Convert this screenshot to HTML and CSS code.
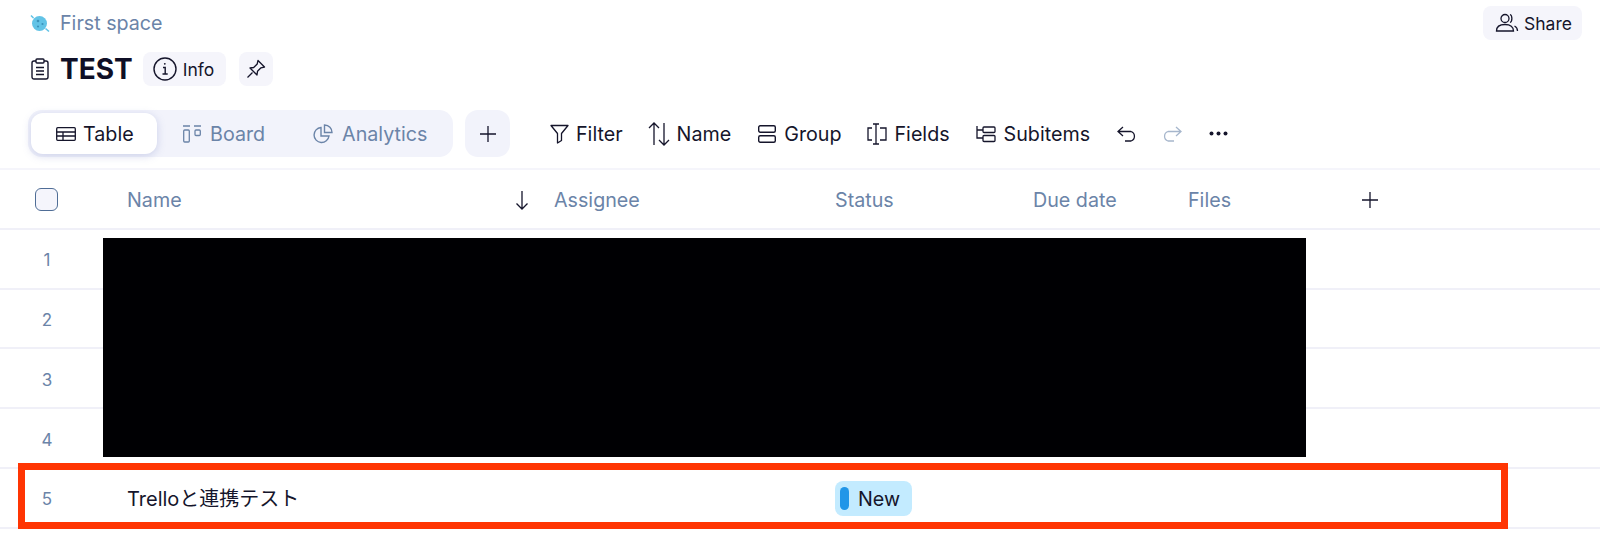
FILE: index.html
```html
<!DOCTYPE html>
<html lang="en">
<head>
<meta charset="utf-8">
<title>TEST</title>
<link rel="stylesheet" href="styles.css">
</head>
<body>
<div class="page">
  <header class="top">
    <div class="crumb">
      <svg class="planet" width="20" height="20" viewBox="0 0 20 20"><circle cx="9.500" cy="10.500" r="7.500" fill="#62c3e6"/><path d="M1 2.500 3.500 5M15.500 15.500l3.500 3" stroke="#62c3e6" stroke-width="1.600" fill="none"/><circle cx="8" cy="8" r="1.300" fill="#3b93ba"/><circle cx="12.500" cy="11" r="1.100" fill="#3b93ba"/><circle cx="8" cy="13.500" r="1.100" fill="#3b93ba"/></svg>
      <span>First space</span>
    </div>
    <button class="soft share">
      <svg width="24" height="20" viewBox="0 0 24 20" fill="none" stroke="#15152b" stroke-width="1.300"><circle cx="10" cy="5.500" r="4"/><path d="M1.500 18c0-4 3-6.500 8.500-6.500s8.500 2.500 8.500 6.500zM15 1.500c2.500.8 2.500 7.200 0 8M19.500 13c2 1 3 2.500 3 5"/></svg>
      <span>Share</span>
    </button>
  </header>

  <div class="title-row">
    <svg width="18" height="22" viewBox="0 0 18 22" fill="none" stroke="#15152b" stroke-width="1.400"><rect x="1" y="3" width="16" height="18" rx="2"/><rect x="5" y="1" width="8" height="4" rx="1" fill="#fff"/><path d="M5 9.500h8M5 13h8M5 16.500h8"/></svg>
    <h1>TEST</h1>
    <button class="soft info">
      <svg width="26" height="26" viewBox="0 0 26 26" fill="none" stroke="#15152b" stroke-width="1.400"><circle cx="13" cy="13" r="11"/><path d="M11 11.500h2.200V18M10.500 18h5.200"/><circle cx="12.800" cy="7.800" r=".9" fill="#15152b" stroke="none"/></svg>
      <span>Info</span>
    </button>
    <button class="soft pin">
      <svg width="20" height="20" viewBox="0 0 20 20" fill="none" stroke="#15152b" stroke-width="1.300" stroke-linejoin="round"><path d="M12 1.500 18.500 8l-3.500.8-3.500 3.500-.5 3.700L4 9l3.700-.5 3.500-3.500zM6.500 13.500 1.500 18.500"/></svg>
    </button>
  </div>

  <div class="toolbar">
    <nav class="tabs">
      <a class="tab active">
        <svg width="20" height="14" viewBox="0 0 20 14" fill="none" stroke="#15152b" stroke-width="1.300"><rect x=".7" y=".7" width="18.600" height="12.600" rx="1"/><path d="M.7 5h18.600M.7 9h18.600M7 5v8.300" /></svg>
        <span>Table</span>
      </a>
      <a class="tab board">
        <svg width="18" height="18" viewBox="0 0 18 18" fill="none" stroke="#6b84a8" stroke-width="1.300"><path d="M0 1h7M11 1h7"/><rect x=".7" y="5" width="5.600" height="12" rx="1"/><rect x="12" y="5" width="5.300" height="5.500" rx="1"/></svg>
        <span>Board</span>
      </a>
      <a class="tab analytics">
        <svg width="20" height="20" viewBox="0 0 20 20" fill="none" stroke="#6b84a8" stroke-width="1.400"><path d="M8 3.500a7.500 7.500 0 1 0 8 8.500H8z"/><path d="M11.500 1v7.500H19C19 4.500 16 1.200 11.500 1z"/></svg>
        <span>Analytics</span>
      </a>
    </nav>
    <button class="add-view">
      <svg width="18" height="18" viewBox="0 0 18 18" stroke="#15152b" stroke-width="1.300"><path d="M9 1v16M1 9h16"/></svg>
    </button>

    <div class="actions">
      <a class="act filter">
        <svg width="19" height="20" viewBox="0 0 19 20" fill="none" stroke="#15152b" stroke-width="1.300" stroke-linejoin="round"><path d="M1 1.500h17l-6.500 8v7l-4 2.500v-9.500z"/></svg>
        <span>Filter</span>
      </a>
      <a class="act sort">
        <svg width="22" height="24" viewBox="0 0 22 24" fill="none" stroke="#15152b" stroke-width="1.300"><path d="M6 23V1M1 6l5-5 5 5M16 1v22M11 18l5 5 5-5"/></svg>
        <span>Name</span>
      </a>
      <a class="act group">
        <svg width="18" height="18" viewBox="0 0 18 18" fill="none" stroke="#15152b" stroke-width="1.400"><rect x=".7" y=".7" width="16.600" height="6.500" rx="1.500"/><rect x=".7" y="10.800" width="16.600" height="6.500" rx="1.500"/></svg>
        <span>Group</span>
      </a>
      <a class="act fields">
        <svg width="20" height="22" viewBox="0 0 20 22" fill="none" stroke="#15152b" stroke-width="1.300"><path d="M6 1h6M9 1v20M6 21h6M5 5H1v12h4M13 5h6v12h-6"/></svg>
        <span>Fields</span>
      </a>
      <a class="act subitems">
        <svg width="20" height="18" viewBox="0 0 20 18" fill="none" stroke="#15152b" stroke-width="1.300"><path d="M1 1v12h6M1 5h6"/><rect x="7" y="2" width="12" height="5.500" rx="1"/><rect x="7" y="10.500" width="12" height="6" rx="1"/></svg>
        <span>Subitems</span>
      </a>
      <svg class="undo" width="20" height="16" viewBox="0 0 20 16" fill="none" stroke="#15152b" stroke-width="1.300"><path d="M6 1 1 5.500 6 10M1 5.500h13a5 5 0 0 1 0 9.500H8"/></svg>
      <svg class="redo" width="20" height="16" viewBox="0 0 20 16" fill="none" stroke="#a6b6cc" stroke-width="1.300"><path d="M14 1l5 4.500L14 10M19 5.500H6a5 5 0 0 0 0 9.500h6"/></svg>
      <svg class="more" width="19" height="5" viewBox="0 0 19 5" fill="#15152b"><circle cx="2.500" cy="2.500" r="2"/><circle cx="9.500" cy="2.500" r="2"/><circle cx="16.500" cy="2.500" r="2"/></svg>
    </div>
  </div>

  <section class="table">
    <div class="row head">
      <div class="idx"><span class="check"></span></div>
      <div class="name-head">
        <span>Name</span>
        <svg width="14" height="20" viewBox="0 0 14 20" fill="none" stroke="#15152b" stroke-width="1.300"><path d="M7 1v18M1.500 13.500 7 19l5.500-5.500"/></svg>
      </div>
      <div>Assignee</div>
      <div>Status</div>
      <div>Due date</div>
      <div>Files</div>
      <div class="add-col">
        <svg width="18" height="18" viewBox="0 0 18 18" stroke="#15152b" stroke-width="1.300"><path d="M9 1v16M1 9h16"/></svg>
      </div>
    </div>
    <div class="row"><div class="idx num">1</div></div>
    <div class="row"><div class="idx num">2</div></div>
    <div class="row"><div class="idx num">3</div></div>
    <div class="row"><div class="idx num">4</div></div>
    <div class="row">
      <div class="idx num">5</div>
      <div class="cell-name">Trelloと連携テスト</div>
      <div></div>
      <div><span class="badge"><i class="dot"></i>New</span></div>
    </div>
    <div class="redact"></div>
    <div class="highlight"></div>
  </section>
</div>
</body>
</html>
```

FILE: styles.css
```css
* { box-sizing: border-box; }
html, body { margin: 0; height: 100%; }
body {
  background: #fff;
  color: #15152b;
  font-family: Inter, "Noto Sans CJK JP", sans-serif;
  font-size: 19.7px;
  overflow: hidden;
}
button { font: inherit; color: inherit; border: 0; padding: 0; }
svg { display: block; flex: none; }

.page { height: 534px; }

.top {
  display: flex;
  justify-content: space-between;
  align-items: center;
  height: 46px;
  padding: 0 18px 0 30px;
}
.crumb { display: flex; align-items: center; gap: 10px; color: #6b84a8; }
.soft { display: flex; align-items: center; background: #f5f5fb; border-radius: 8px; }
.share { height: 34px; width: 99px; padding-left: 12px; gap: 5px; font-size: 17.500px; }

.title-row { display: flex; align-items: center; height: 34px; margin-top: 6px; padding-left: 31px; }
.title-row h1 { margin: 0 10px 0 11px; font-size: 28px; font-weight: 700; line-height: 34px; color: #0f0f26; }
.info { height: 34px; width: 83px; padding-left: 9px; gap: 5px; font-size: 17.500px; }
.pin { height: 34px; width: 34px; margin-left: 13px; justify-content: center; }

.toolbar { display: flex; align-items: center; height: 47px; margin-top: 24px; padding-left: 28px; }
.tabs { display: flex; align-items: center; width: 425px; height: 47px; padding: 3px; background: #f2f3fb; border-radius: 14px; }
.tab { display: flex; align-items: center; height: 41px; color: #6b84a8; }
.tab.active {
  width: 126px;
  padding-left: 25px;
  gap: 7px;
  color: #15152b;
  background: #fff;
  border-radius: 12px;
  box-shadow: 0 2px 8px rgba(104, 120, 190, .28);
}
.board { margin-left: 26px; gap: 9px; }
.analytics { margin-left: 48px; gap: 9px; }
.add-view {
  display: flex; align-items: center; justify-content: center;
  width: 45px; height: 47px; margin-left: 12px;
  background: #f2f3fb; border-radius: 13px;
}

.actions { display: flex; align-items: center; margin-left: 40px; }
.act { display: flex; align-items: center; }
.filter { gap: 7px; }
.sort { gap: 7px; margin-left: 25px; }
.group { gap: 8px; margin-left: 27px; }
.fields { gap: 8px; margin-left: 25px; }
.subitems { gap: 8px; margin-left: 26px; }
.undo { margin-left: 27px; }
.redo { margin-left: 25px; }
.more { margin-left: 27px; }

.table { position: relative; margin-top: 11px; border-top: 2px solid #f5f5fb; }
.row {
  display: grid;
  grid-template-columns: 127px 427px 281px 198px 155px 173px 1fr;
  align-items: center;
  height: 59.8px;
  border-bottom: 2px solid #f0f0f8;
}
.head { color: #6b84a8; padding-top: 2px; }
.idx { width: 94px; text-align: center; color: #6b84a8; font-size: 17px; }
.num { padding-top: 3px; }
.check {
  display: block; width: 23px; height: 23px; margin-left: 35px;
  background: #f5f5fc; border: 1.500px solid #4f6d96; border-radius: 6px;
}
.name-head { display: flex; justify-content: space-between; align-items: center; padding-right: 25px; }
.cell-name { grid-column: 2; color: #15152b; font-size: 20px; }
.badge {
  display: inline-flex; align-items: center; gap: 9px;
  width: 77px; height: 35px; padding-left: 5px; margin-top: 2px;
  background: #c3ebff; border-radius: 8px; color: #15152b;
}
.dot { width: 9px; height: 23px; background: #2196e8; border-radius: 5px; }

.redact { position: absolute; left: 103px; top: 68px; width: 1203px; height: 219px; background: #000003; }
.highlight { position: absolute; left: 18px; top: 293px; width: 1490px; height: 66px; border: 7px solid #ff3503; }
```
